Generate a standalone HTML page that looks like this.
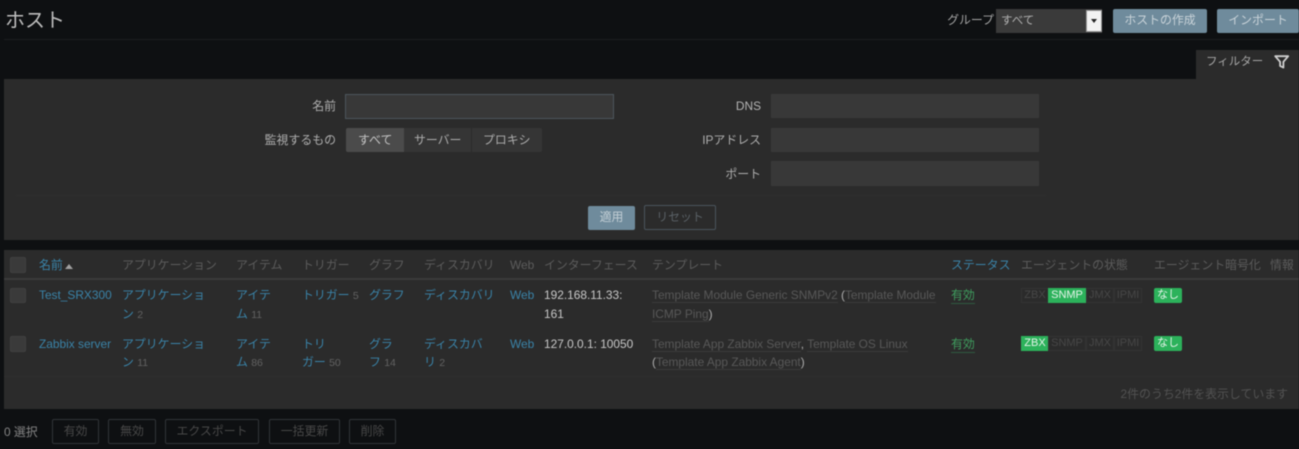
<!DOCTYPE html>
<html lang="ja"><head><meta charset="utf-8"><title>ホスト</title>
<style>
html,body{margin:0;padding:0;background:#0e1012}
#p{position:relative;width:1299px;height:449px;overflow:hidden;background:#0e1012;font-family:"Liberation Sans","Noto Sans CJK JP",sans-serif;font-size:11.9px;color:#adadad;filter:blur(.6px)}
#p div{position:absolute;white-space:nowrap;box-sizing:border-box}
.t{line-height:16px;height:16px}
.r{text-align:right}
.h{color:#5c5c5c}
.l{color:#3a83a8}
.n{color:#626262;font-size:10.5px}
.w{color:#c8c8c8}
.u{color:#585858;border-bottom:1px solid #3a3a3a;line-height:14px}
.in{background:#383838;height:25px}
.bt{border:1px solid #303437;border-radius:2px;color:#484848;text-align:center;height:25px;line-height:23px;top:419px}
.cb{left:10px;width:15.5px;height:15.5px;background:#3a3a3a;border:1px solid #404040;border-radius:2px}
.s{height:15px;line-height:13px;font-size:11px;text-align:center;border:1px solid #333;color:#474747;width:28px}
.g{background:#2cb25b;border-color:#2cb25b;color:#e4f3e9}
.tb{background:#6f8b9c;color:#c9d3d9;border-radius:2px;text-align:center;height:24px;line-height:23px}
</style></head><body><div id="p">
<div class="t" style="left:5px;top:7px;font-size:20px;line-height:28px;height:28px;color:#bdbdbd">ホスト</div>
<div style="left:4px;top:39px;width:1295px;height:1px;background:#1c1e20"></div>
<div class="t r" style="left:930px;top:12px;width:64px;color:#a5a5a5">グループ</div>
<div style="left:996px;top:9px;width:106px;height:24px;background:#3a3a3a"></div>
<div class="t" style="left:1001px;top:13px;color:#b0b0b0;font-size:11.5px">すべて</div>
<div style="left:1085.5px;top:10px;width:16px;height:22px;background:#f2f2f2;border:1px solid #999"></div>
<div style="left:1090.5px;top:19px;width:0;height:0;border:3px solid transparent;border-top:4px solid #222;border-bottom:0"></div>
<div class="tb" style="left:1113px;top:9px;width:94px">ホストの作成</div>
<div class="tb" style="left:1217px;top:9px;width:82px">インポート</div>

<div style="left:1196px;top:50px;width:103px;height:30px;background:#2b2b2b"></div>
<div class="t" style="left:1206px;top:54px;color:#a5a5a5;font-size:11.5px">フィルター</div>
<svg style="position:absolute;left:1274px;top:55px" width="16" height="14" viewBox="0 0 16 14"><path d="M1.2 1.2H14.2L9.4 6.8V12.6L6.1 11V6.8Z" fill="none" stroke="#cfcfcf" stroke-width="1.8" stroke-linejoin="round"/></svg>

<div style="left:4px;top:79px;width:1295px;height:161px;background:#2b2b2b"></div>
<div class="t r" style="left:240px;top:98px;width:96px">名前</div>
<div class="in" style="left:345px;top:94px;width:269px;border:1px solid #4c565c"></div>
<div class="t r" style="left:240px;top:132px;width:96px">監視するもの</div>
<div style="left:346px;top:128px;width:196px;height:24px;background:#353535;border-radius:2px"></div>
<div style="left:346px;top:128px;width:58px;height:24px;background:#4b4b4b;border-radius:2px 0 0 2px"></div>
<div style="left:471px;top:128px;width:1px;height:24px;background:#2b2b2b"></div>
<div class="t" style="left:358px;top:132px;color:#c4c4c4">すべて</div>
<div class="t" style="left:414px;top:132px">サーバー</div>
<div class="t" style="left:483px;top:132px">プロキシ</div>
<div class="t r" style="left:660px;top:98px;width:101px;color:#b5b5b5">DNS</div>
<div class="in" style="left:771px;top:94px;width:268px;height:24px"></div>
<div class="t r" style="left:660px;top:132px;width:101px">IPアドレス</div>
<div class="in" style="left:771px;top:128px;width:268px;height:24px"></div>
<div class="t r" style="left:660px;top:166px;width:101px">ポート</div>
<div class="in" style="left:771px;top:161px;width:268px"></div>
<div style="left:16px;top:195px;width:1030px;height:1px;background:#2e2e2e"></div>
<div class="tb" style="left:588px;top:206px;width:47px;height:24px;color:#c2ced5">適用</div>
<div style="left:644px;top:205px;width:72px;height:25px;line-height:23px;text-align:center;border:1px solid #4a555c;border-radius:2px;color:#5a6166">リセット</div>

<div style="left:4px;top:250px;width:1295px;height:159px;background:#2b2b2b"></div>
<div style="left:4px;top:278px;width:1295px;height:2px;background:#3a3a3a"></div>
<div style="left:4px;top:376px;width:1295px;height:1px;background:#2f2f2f"></div>

<div class="cb" style="top:257px"></div>
<div class="t l" style="left:39px;top:257px">名前</div>
<div style="left:65px;top:264px;width:0;height:0;border:4px solid transparent;border-bottom:5px solid #a0a0a0;border-top:0"></div>
<div class="t h" style="left:122px;top:257px">アプリケーション</div>
<div class="t h" style="left:236px;top:257px">アイテム</div>
<div class="t h" style="left:302px;top:257px">トリガー</div>
<div class="t h" style="left:369px;top:257px">グラフ</div>
<div class="t h" style="left:424px;top:257px">ディスカバリ</div>
<div class="t h" style="left:510px;top:257px">Web</div>
<div class="t h" style="left:544px;top:257px">インターフェース</div>
<div class="t h" style="left:652px;top:257px">テンプレート</div>
<div class="t l" style="left:951px;top:257px">ステータス</div>
<div class="t h" style="left:1021px;top:257px">エージェントの状態</div>
<div class="t h" style="left:1154px;top:257px">エージェント暗号化</div>
<div class="t h" style="left:1270px;top:257px">情報</div>

<div class="cb" style="top:287.5px"></div>
<div class="t l" style="left:39px;top:287px">Test_SRX300</div>
<div class="t l" style="left:122px;top:287px">アプリケーショ</div>
<div class="t l" style="left:122px;top:306px">ン <span class="n">2</span></div>
<div class="t l" style="left:236px;top:287px">アイテ</div>
<div class="t l" style="left:236px;top:306px">ム <span class="n">11</span></div>
<div class="t l" style="left:302px;top:287px">トリガー <span class="n">5</span></div>
<div class="t l" style="left:369px;top:287px">グラフ</div>
<div class="t l" style="left:424px;top:287px">ディスカバリ</div>
<div class="t l" style="left:510px;top:287px">Web</div>
<div class="t w" style="left:544px;top:287px">192.168.11.33:</div>
<div class="t w" style="left:544px;top:306px">161</div>
<div class="t" style="left:652px;top:287px;color:#adadad"><span class="u">Template Module Generic SNMPv2</span> (<span class="u">Template Module</span></div>
<div class="t" style="left:652px;top:306px;color:#adadad"><span class="u">ICMP Ping</span>)</div>
<div class="t" style="left:951px;top:287px;color:#3f9c5e;border-bottom:1px solid #2f5a40;height:17px">有効</div>
<div class="s" style="left:1021px;top:288px">ZBX</div>
<div class="s g" style="left:1048px;top:288px;width:38px">SNMP</div>
<div class="s" style="left:1086px;top:288px">JMX</div>
<div class="s" style="left:1114px;top:288px">IPMI</div>
<div class="s g" style="left:1154px;top:288px;border-radius:2px">なし</div>

<div class="cb" style="top:336px"></div>
<div class="t l" style="left:39px;top:336px">Zabbix server</div>
<div class="t l" style="left:122px;top:336px">アプリケーショ</div>
<div class="t l" style="left:122px;top:354px">ン <span class="n">11</span></div>
<div class="t l" style="left:236px;top:336px">アイテ</div>
<div class="t l" style="left:236px;top:354px">ム <span class="n">86</span></div>
<div class="t l" style="left:302px;top:336px">トリ</div>
<div class="t l" style="left:302px;top:354px">ガー <span class="n">50</span></div>
<div class="t l" style="left:369px;top:336px">グラ</div>
<div class="t l" style="left:369px;top:354px">フ <span class="n">14</span></div>
<div class="t l" style="left:424px;top:336px">ディスカバ</div>
<div class="t l" style="left:424px;top:354px">リ <span class="n">2</span></div>
<div class="t l" style="left:510px;top:336px">Web</div>
<div class="t w" style="left:544px;top:336px">127.0.0.1: 10050</div>
<div class="t" style="left:652px;top:336px;color:#adadad"><span class="u">Template App Zabbix Server</span>, <span class="u">Template OS Linux</span></div>
<div class="t" style="left:652px;top:354px;color:#adadad">(<span class="u">Template App Zabbix Agent</span>)</div>
<div class="t" style="left:951px;top:336px;color:#3f9c5e;border-bottom:1px solid #2f5a40;height:17px">有効</div>
<div class="s g" style="left:1021px;top:336px">ZBX</div>
<div class="s" style="left:1048px;top:336px;width:38px">SNMP</div>
<div class="s" style="left:1086px;top:336px">JMX</div>
<div class="s" style="left:1114px;top:336px">IPMI</div>
<div class="s g" style="left:1154px;top:336px;border-radius:2px">なし</div>

<div class="t r" style="left:1000px;top:386px;width:288px;color:#525252">2件のうち2件を表示しています</div>

<div class="t" style="left:4px;top:424px;color:#858585">0 選択</div>
<div class="bt" style="left:52px;width:47px">有効</div>
<div class="bt" style="left:108px;width:48px">無効</div>
<div class="bt" style="left:165px;width:94px">エクスポート</div>
<div class="bt" style="left:269px;width:71px">一括更新</div>
<div class="bt" style="left:349px;width:47px">削除</div>
</div></body></html>
